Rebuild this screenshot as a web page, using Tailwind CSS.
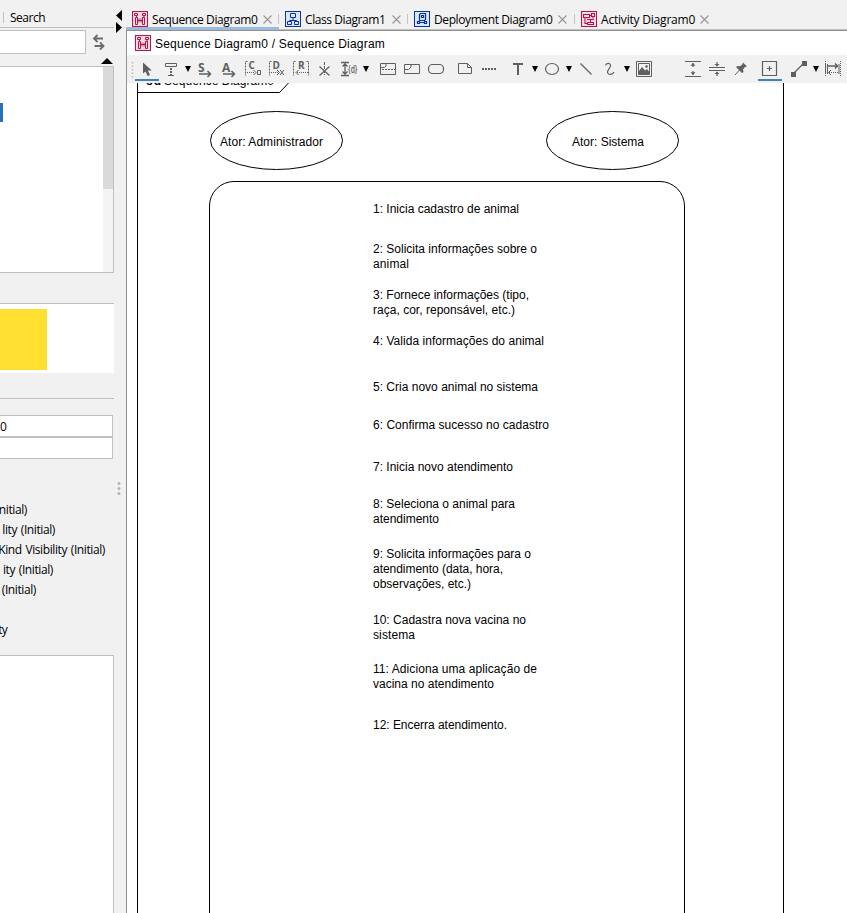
<!DOCTYPE html>
<html lang="pt">
<head>
<meta charset="utf-8">
<title>Sequence Diagram</title>
<script src="https://cdn.jsdelivr.net/npm/@tailwindcss/browser@4"></script>
</head>
<body class="w-[847px] h-[913px] overflow-hidden bg-[#f1f1f1] text-black text-[12px] leading-[16px] font-['Open_Sans','Noto_Sans',sans-serif]">
<svg class="hidden">
  <symbol id="seq" viewBox="0 0 16 16"><rect x=".5" y=".5" width="15" height="15" fill="#f8dbe3" stroke="#b5144a"/><g fill="none" stroke="#b5144a"><path d="M2.500 2.500h3v2h-3zM10.500 2.500h3v2h-3zM4.500 4.500v2M12 4.500v2M3.500 6.500h2v7h-2zM10.500 6.500h2v7h-2zM5.500 9.500h5"/><path d="M7 7.500v4M9 7.500v4" stroke-width=".8"/></g></symbol>
  <symbol id="cls" viewBox="0 0 16 16"><rect x=".5" y=".5" width="15" height="15" fill="#dbe7f8" stroke="#06359c"/><path d="M5.500 2.500h5v4h-5zM8 6.500v3M4.500 11V9.500h7V11M2.500 10.500h4v3h-4zM9.500 10.500h4v3h-4z" fill="none" stroke="#06359c"/></symbol>
  <symbol id="dep" viewBox="0 0 16 16"><rect x=".5" y=".5" width="15" height="15" fill="#dbe7f8" stroke="#06359c"/><path d="M5.500 3.500l1-1h5v6l-1 1h-5zM7.500 4.500h2v2h-2zM5.500 11.500h5M3.500 10.500h2v2h-2zM10.500 10.500h2v2h-2z" fill="none" stroke="#06359c" stroke-width="1.200"/></symbol>
  <symbol id="act" viewBox="0 0 16 16"><rect x=".5" y=".5" width="15" height="15" fill="#f8dbe3" stroke="#b5144a"/><path d="M2.500 3.500h6v3h-6zM8.500 4.500h2M10.500 2.500h3v3h-3zM12 5.500v2M6 8.500h7M9.500 8.500v3M6.500 11.500h6v2h-6zM4 6.500v6h2" fill="none" stroke="#b5144a" stroke-width="1.100"/></symbol>
  <symbol id="close" viewBox="0 0 9 9"><path d="M.5.5l8 8M8.500.5l-8 8" stroke="#979797" stroke-width="1.100"/></symbol>
  <symbol id="dd" viewBox="0 0 10 24"><path d="M2 9h6L5 15z" fill="#000"/></symbol>
</svg>
<div class="flex w-[847px] h-[913px]">
  <!-- side panel -->
  <aside class="relative w-[126px] h-full shrink-0 overflow-hidden flex flex-col">
    <div class="h-[28px] w-[114px] shrink-0 border-b border-[#c0c0c0] flex items-start pt-[10px] pl-[3px]"><span class="w-px h-[11px] mt-[2px] bg-[#c0c0c0]"></span><span class="ml-[6px] tracking-[-0.5px]">Search</span></div>
    <div class="flex mt-[2px] h-[24px] shrink-0">
      <div class="w-[86px] border border-l-0 border-[#c0c0c0] bg-white"></div>
      <svg class="w-[13px] h-[17px] ml-[6px] mt-[4px]" viewBox="0 0 13 17" fill="none" stroke="#6b6b6b" stroke-width="1.800"><path d="M2 4.500h9M5.500 1L2 4.500 5.500 8M2.500 12h9M8 8.500l3.500 3.500L8 15.500"/></svg>
    </div>
    <svg class="ml-[101px] mt-[4px] w-[12px] h-[6px] shrink-0" viewBox="0 0 12 6"><path d="M0 6L6 0l6 6z"/></svg>
    <div class="mt-[2px] h-[207px] w-[114px] shrink-0 border border-l-0 border-[#c0c0c0] bg-white flex justify-between">
      <div class="mt-[36px] w-[3px] h-[19px] bg-[#2672bf]"></div>
      <div class="w-[10px] h-full bg-[#f4f4f4]"><div class="h-[122px] bg-[#dadada]"></div></div>
    </div>
    <div class="mt-[30px] h-[70px] w-[114px] shrink-0 border-t border-[#c0c0c0] bg-white pt-[5px]"><div class="w-[47px] h-[61px] bg-[#ffe031]"></div></div>
    <div class="mt-[25px] h-px w-[114px] shrink-0 bg-[#c0c0c0]"></div>
    <div class="mt-[16px] h-[22px] w-[113px] shrink-0 border border-l-0 border-[#c0c0c0] bg-white"><div class="h-[20px] leading-[21px] tracking-[-0.3px]">0</div></div>
    <div class="h-[22px] w-[113px] shrink-0 border border-l-0 border-[#c0c0c0] bg-white"></div>
    <div class="mt-[41px] shrink-0 flex flex-col leading-[20px] tracking-[-0.4px] word-spacing-[1px] whitespace-nowrap">
      <div class="w-[27px] h-[20px] flex justify-end">nitial)</div>
      <div class="w-[55px] h-[20px] flex justify-end [word-spacing:1px]">lity (Initial)</div>
      <div class="w-[105px] h-[20px] flex justify-end [word-spacing:1px]">Kind Visibility (Initial)</div>
      <div class="w-[53px] h-[20px] flex justify-end [word-spacing:1px]">ity (Initial)</div>
      <div class="w-[36px] h-[20px] flex justify-end">(Initial)</div>
      <div class="w-[7px] h-[20px] mt-[20px] flex justify-end tracking-[-0.8px]">ty</div>
    </div>
    <div class="mt-[15px] h-[260px] w-[114px] shrink-0 border border-l-0 border-[#c0c0c0] bg-white"></div>
    <svg class="absolute left-[115px] top-[10px] w-[8px] h-[24px]" viewBox="0 0 8 24"><path d="M7 0v11L1 5.500zM1 12v11l6-5.500z"/></svg>
    <svg class="absolute left-[116px] top-[481px] w-[6px] h-[15px]" viewBox="0 0 6 15" fill="#b3b3b3"><circle cx="3" cy="2.500" r="1.500"/><circle cx="3" cy="7.500" r="1.500"/><circle cx="3" cy="12.500" r="1.500"/></svg>
  </aside>
  <main class="flex-1 min-w-0 flex flex-col">
    <!-- tabs -->
    <div class="h-[30px] shrink-0 flex whitespace-nowrap border-b border-[#c0c0c0]">
      <div class="w-[153px] h-[30px] shrink-0 border-b-[3px] border-[#9abcda] flex items-start pl-[6px] pt-[11px]">
        <svg class="w-4 h-4 shrink-0"><use href="#seq"/></svg><span class="ml-[4px] mt-px w-[111px] shrink-0 tracking-[-0.4px]">Sequence Diagram0</span><svg class="w-[9px] h-[9px] mt-[4px] shrink-0"><use href="#close"/></svg><span class="ml-[6px] w-px h-[10px] mt-[3px] shrink-0 bg-[#c4c4c4]"></span>
      </div>
      <div class="w-[129px] shrink-0 flex items-start pl-[6px] pt-[11px]">
        <svg class="w-4 h-4 shrink-0"><use href="#cls"/></svg><span class="ml-[4px] mt-px w-[87px] shrink-0 tracking-[-0.42px]">Class Diagram1</span><svg class="w-[9px] h-[9px] mt-[4px] shrink-0"><use href="#close"/></svg><span class="ml-[6px] w-px h-[10px] mt-[3px] shrink-0 bg-[#c4c4c4]"></span>
      </div>
      <div class="w-[167px] shrink-0 flex items-start pl-[6px] pt-[11px]">
        <svg class="w-4 h-4 shrink-0"><use href="#dep"/></svg><span class="ml-[4px] mt-px w-[124px] shrink-0 tracking-[-0.4px]">Deployment Diagram0</span><svg class="w-[9px] h-[9px] mt-[4px] shrink-0"><use href="#close"/></svg><span class="ml-[7px] w-px h-[10px] mt-[3px] shrink-0 bg-[#c4c4c4]"></span>
      </div>
      <div class="shrink-0 flex items-start pl-[6px] pt-[11px]">
        <svg class="w-4 h-4 shrink-0"><use href="#act"/></svg><span class="ml-[4px] mt-px w-[99px] shrink-0 tracking-[-0.2px]">Activity Diagram0</span><svg class="w-[9px] h-[9px] mt-[4px] shrink-0"><use href="#close"/></svg>
      </div>
    </div>
    <div class="flex-1 min-h-0 border-t border-l border-[#919191] bg-white flex flex-col">
      <div class="h-[24px] shrink-0 flex items-start pt-[4px] pl-[8px]"><svg class="w-4 h-4"><use href="#seq"/></svg><span class="ml-[4px] mt-px tracking-[0.22px] font-['Liberation_Sans',sans-serif]">Sequence Diagram0 / Sequence Diagram</span></div>
      <!-- toolbar -->
      <div class="h-[28px] shrink-0 bg-[#f1f1f1] flex items-start pt-[2px] overflow-hidden">
        <svg class="w-[8px] h-[24px] shrink-0" viewBox="0 0 8 24"><path d="M5.500 5v16" stroke="#bbb" stroke-width="1.500" stroke-dasharray="1.500 2"/></svg>
        <div class="w-6 h-6 shrink-0 border-b-2 border-[#3d80c3]"><svg class="w-6 h-6" viewBox="0 0 24 24"><path d="M8 5.500v11l2.500-2 2.200 4.500 2.300-1-2.200-4.500h4z" fill="#5f5f5f"/></svg></div>
        <svg class="w-6 h-6 shrink-0" viewBox="0 0 24 24" fill="none" stroke="#5f5f5f"><path d="M6.500 6.500h11v3h-11z"/><path d="M12 11v8" stroke-width="2" stroke-dasharray="2 1"/><path d="M9 18.500h6"/></svg>
        <svg class="w-[10px] h-6 shrink-0"><use href="#dd"/></svg>
        <svg class="w-6 h-6 shrink-0" viewBox="0 0 24 24" fill="none" stroke="#5f5f5f"><text x="5" y="14.500" font-size="12" font-weight="700" fill="#5f5f5f" stroke="none">S</text><path d="M6 17h11M14.500 14l3 3-3 3" stroke-width="1.500"/></svg>
        <svg class="w-6 h-6 shrink-0" viewBox="0 0 24 24" fill="none" stroke="#5f5f5f"><text x="5" y="14.500" font-size="12" font-weight="700" fill="#5f5f5f" stroke="none">A</text><path d="M6 17h11M14.500 14l3 3-3 3" stroke-width="1.500"/></svg>
        <svg class="w-6 h-6 shrink-0" viewBox="0 0 24 24" fill="none" stroke="#5f5f5f"><text x="7.500" y="11.500" font-size="10" font-weight="700" fill="#5f5f5f" stroke="none">C</text><path d="M6.500 4.500h-2v14" stroke-dasharray="2 1"/><path d="M6 15.500h8" stroke-dasharray="1 1"/><path d="M12.500 13l2.500 2.500-2.500 2.500M16.500 13.500h3v4h-3z"/></svg>
        <svg class="w-6 h-6 shrink-0" viewBox="0 0 24 24" fill="none" stroke="#5f5f5f"><text x="7.500" y="11.500" font-size="10" font-weight="700" fill="#5f5f5f" stroke="none">D</text><path d="M6.500 4.500h-2v14" stroke-dasharray="2 1"/><path d="M6 15.500h8" stroke-dasharray="1 1"/><path d="M12 13l2.500 2.500L12 18M15 13l4 5M19 13l-4 5"/></svg>
        <svg class="w-6 h-6 shrink-0" viewBox="0 0 24 24" fill="none" stroke="#5f5f5f"><text x="9" y="11.500" font-size="10" font-weight="700" fill="#5f5f5f" stroke="none">R</text><path d="M6.500 4.500h-2v14M17.500 4.500h2v14" stroke-dasharray="2 1"/><path d="M8 15.500h11" stroke-dasharray="1 1"/><path d="M9.500 13L7 15.500 9.500 18"/></svg>
        <svg class="w-6 h-6 shrink-0" viewBox="0 0 24 24" fill="none" stroke="#5f5f5f"><path d="M11.500 5v13" stroke-dasharray="3 1"/><path d="M6.500 18.500l10-9M6.500 9.500l10 9" stroke-width="1.200"/></svg>
        <svg class="w-6 h-6 shrink-0" viewBox="0 0 24 24" fill="none" stroke="#5f5f5f"><path d="M4 5.500h8M4 18.500h8M8 6v12M5.500 9.500L8 7l2.500 2.500M5.500 14.500L8 17l2.500-2.500" stroke-width="1.300"/><text x="11" y="15.500" font-size="10" font-weight="600" textLength="9.500" lengthAdjust="spacingAndGlyphs" fill="#5f5f5f" stroke="none">{d}</text></svg>
        <svg class="w-[10px] h-6 shrink-0"><use href="#dd"/></svg>
        <svg class="w-6 h-6 shrink-0 ml-[5px]" viewBox="0 0 24 24" fill="none" stroke="#5f5f5f"><path d="M4.500 6.500h15v11h-15zM4.500 10.500h4l1.500-1.500V6.500"/><path d="M6 12.500h13" stroke-dasharray="2 1"/></svg>
        <svg class="w-6 h-6 shrink-0" viewBox="0 0 24 24" fill="none" stroke="#5f5f5f"><path d="M4.500 7.500h15v9h-15zM4.500 12.500h4l2.500-2.500V7.500"/></svg>
        <svg class="w-6 h-6 shrink-0" viewBox="0 0 24 24" fill="none" stroke="#5f5f5f"><rect x="4.500" y="7.500" width="15" height="9" rx="4" stroke-width="1.200"/></svg>
        <svg class="w-6 h-6 shrink-0 ml-[5px]" viewBox="0 0 24 24" fill="none" stroke="#5f5f5f"><path d="M5.500 6.500h9l4 4v6h-13zM14.500 6.500v4h4"/></svg>
        <svg class="w-6 h-6 shrink-0" viewBox="0 0 24 24"><path d="M5 12h14" stroke="#5f5f5f" stroke-width="2" stroke-dasharray="2 1"/></svg>
        <svg class="w-6 h-6 shrink-0 ml-[5px]" viewBox="0 0 24 24"><path d="M7 7h10M12 6.500V18" stroke="#5f5f5f" stroke-width="2"/></svg>
        <svg class="w-[10px] h-6 shrink-0"><use href="#dd"/></svg>
        <svg class="w-6 h-6 shrink-0" viewBox="0 0 24 24"><ellipse cx="12" cy="12" rx="6.500" ry="5.500" fill="none" stroke="#5f5f5f" stroke-width="1.200"/></svg>
        <svg class="w-[10px] h-6 shrink-0"><use href="#dd"/></svg>
        <svg class="w-6 h-6 shrink-0" viewBox="0 0 24 24"><path d="M6.500 6.500l11 11" stroke="#5f5f5f" stroke-width="1.200"/></svg>
        <svg class="w-6 h-6 shrink-0" viewBox="0 0 24 24"><path d="M7.500 8.500C8 6 12.500 5.500 12.500 8.500S9 13 9.500 15.500s5 2.500 6.500-.5" fill="none" stroke="#5f5f5f" stroke-width="1.200"/></svg>
        <svg class="w-[10px] h-6 shrink-0"><use href="#dd"/></svg>
        <svg class="w-6 h-6 shrink-0" viewBox="0 0 24 24"><path d="M4.500 4.500h15v15h-15zM6.500 6.500h11v11h-11z" fill="none" stroke="#5f5f5f"/><path d="M7 17v-3l3-4 3 3.500 2-1.500 2 2.500V17z" fill="#5f5f5f"/><circle cx="14.500" cy="9.500" r="1.300" fill="#5f5f5f"/></svg>
        <svg class="w-6 h-6 shrink-0 ml-[25px]" viewBox="0 0 24 24" stroke="#5f5f5f" fill="#5f5f5f"><path d="M4 4.500h16M4 19.500h16M12 6v4M12 14v4" stroke-width="1.200"/><path d="M9.500 8.700L12 6l2.500 2.700zM9.500 15.300l2.500 2.700 2.500-2.700z" stroke="none"/></svg>
        <svg class="w-6 h-6 shrink-0" viewBox="0 0 24 24" stroke="#5f5f5f" fill="#5f5f5f"><path d="M4 10.500h16M4 13.500h16M12 5v4M12 15v4" stroke-width="1.200"/><path d="M9.500 7h5L12 9.500zM9.500 17h5L12 14.500z" stroke="none"/></svg>
        <svg class="w-6 h-6 shrink-0" viewBox="0 0 24 24"><path d="M14 5.500l4 4-2 .5-2 2.500.5 2.500-1.500 1-6-6 1.500-1 2.500.3 2.500-2z" fill="#5f5f5f"/><path d="M11 12.500L6 18" stroke="#5f5f5f"/></svg>
        <div class="w-6 h-6 shrink-0 ml-[5px] border-b-2 border-[#3d80c3]"><svg class="w-6 h-6" viewBox="0 0 24 24"><path d="M4.500 4.500h14v14h-14zM9 11.500h5M11.500 9v5" fill="none" stroke="#5f5f5f" stroke-width="1.200"/></svg></div>
        <svg class="w-6 h-6 shrink-0 ml-[4px]" viewBox="0 0 24 24"><path d="M7 17L17 7" stroke="#5f5f5f" stroke-width="1.300"/><path d="M5 15h5v5H5zM16 4h5v5h-5z" fill="#5f5f5f"/></svg>
        <svg class="w-[10px] h-6 shrink-0 ml-px"><use href="#dd"/></svg>
        <svg class="w-6 h-6 shrink-0" viewBox="0 0 24 24" fill="none" stroke="#5f5f5f"><path d="M4.500 7v10M6.500 7v10M18 7v10"/><path d="M6.500 9h10M14 6.500L16.500 9 14 11.500" stroke-width="1.500"/><path d="M8 15.500h9M4.500 4v16M19.500 4v16" stroke-dasharray="1 1"/><path d="M10 13l-2.500 2.500L10 18"/></svg>
      </div>
      <!-- diagram canvas -->
      <svg class="w-[720px] h-[830px] shrink-0" viewBox="127 83 720 830" fill="none" stroke="#000" font-size="12" font-family="'Liberation Sans',sans-serif">
        <path d="M137.500 83v830M783.500 83v830M137.500 92.500h142l9-9.500"/>
        <ellipse cx="276.500" cy="140.500" rx="66" ry="29"/><ellipse cx="612.500" cy="140.500" rx="66" ry="29"/>
        <path d="M209.500 913V206a24.500 24.500 0 0 1 24.500-24.500h426a24.500 24.500 0 0 1 24.500 24.500v707"/>
        <g fill="#000" stroke="none">
          <text x="146" y="85" font-weight="700" textLength="15">sd</text><text x="164" y="85" textLength="110">Sequence Diagram0</text>
          <text x="220" y="146" textLength="103">Ator: Administrador</text>
          <text x="572" y="146" textLength="72">Ator: Sistema</text>
          <text x="373" y="213" textLength="146">1: Inicia cadastro de animal</text>
          <text x="373" y="253" textLength="164">2: Solicita informações sobre o</text><text x="373" y="268" textLength="36">animal</text>
          <text x="373" y="299" textLength="156">3: Fornece informações (tipo,</text><text x="373" y="314" textLength="142">raça, cor, reponsável, etc.)</text>
          <text x="373" y="345" textLength="171">4: Valida informações do animal</text>
          <text x="373" y="391" textLength="165">5: Cria novo animal no sistema</text>
          <text x="373" y="429" textLength="176">6: Confirma sucesso no cadastro</text>
          <text x="373" y="471" textLength="140">7: Inicia novo atendimento</text>
          <text x="373" y="508" textLength="142">8: Seleciona o animal para</text><text x="373" y="523" textLength="66">atendimento</text>
          <text x="373" y="558" textLength="158">9: Solicita informações para o</text><text x="373" y="573" textLength="130">atendimento (data, hora,</text><text x="373" y="588" textLength="98">observações, etc.)</text>
          <text x="373" y="624" textLength="153">10: Cadastra nova vacina no</text><text x="373" y="639" textLength="42">sistema</text>
          <text x="373" y="673" textLength="164">11: Adiciona uma aplicação de</text><text x="373" y="688" textLength="121">vacina no atendimento</text>
          <text x="373" y="729" textLength="134">12: Encerra atendimento.</text>
        </g>
      </svg>
    </div>
  </main>
</div>
</body>
</html>
